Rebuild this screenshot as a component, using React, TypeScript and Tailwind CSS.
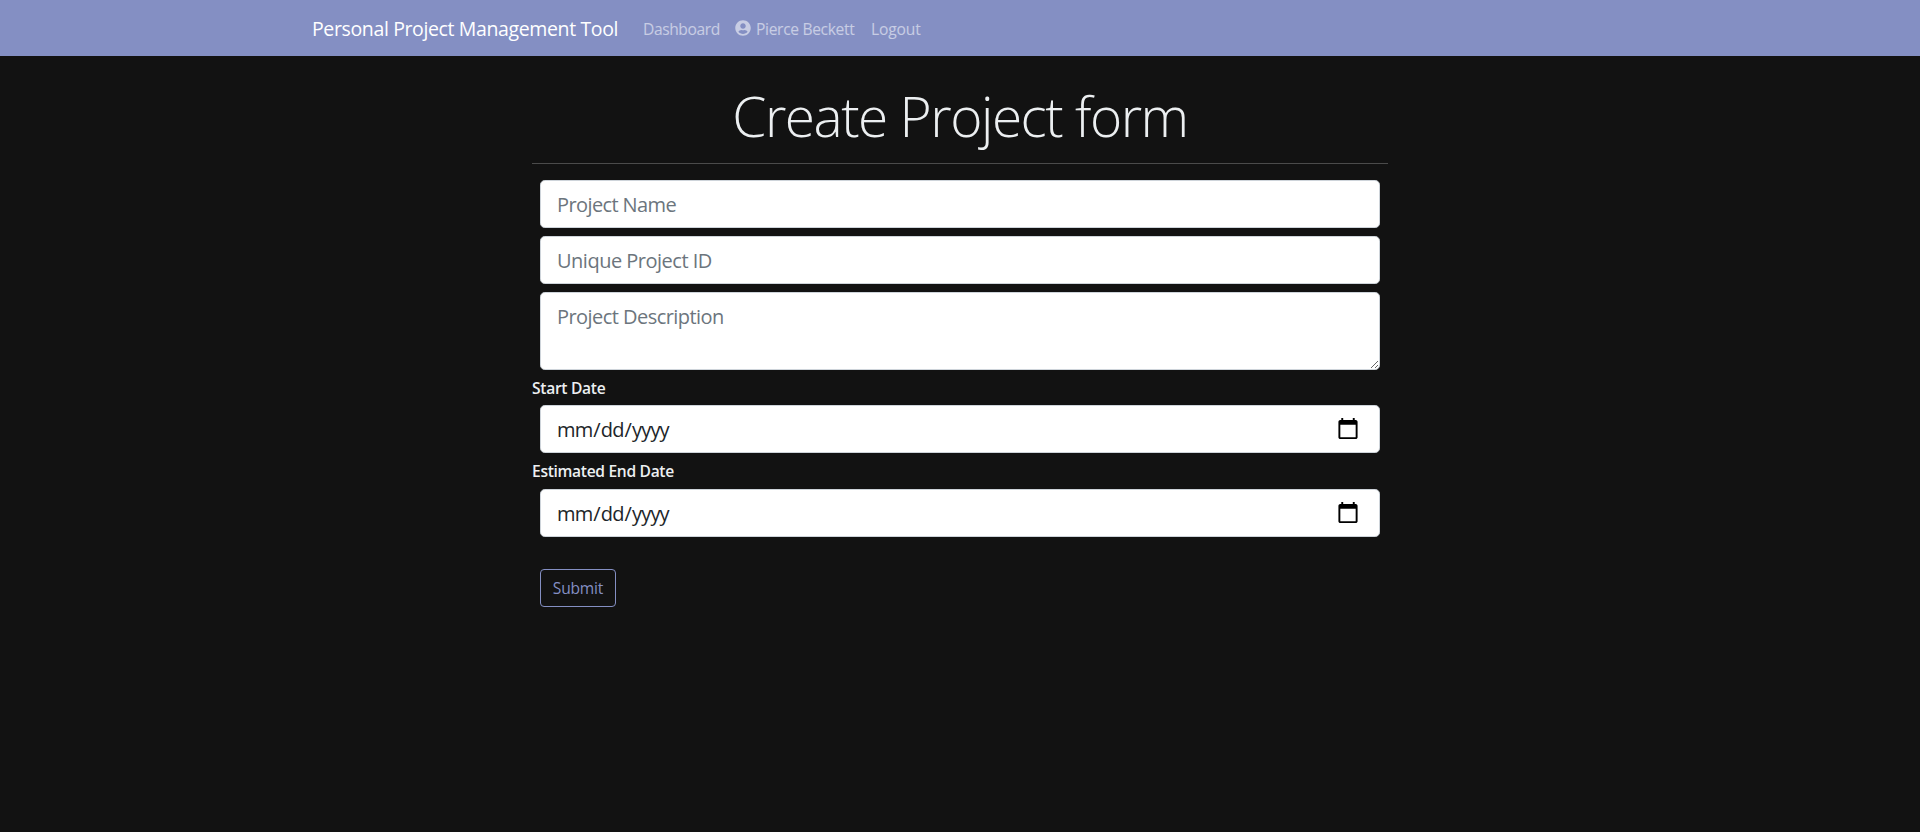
import React from "react";

const field =
  "mx-2 block w-[840px] rounded-[4.8px] border border-[#ced4da] bg-white px-4 text-[20px] leading-[30px] placeholder:text-[#6c757d] placeholder:opacity-100 outline-none";

const dateField =
  "h-12 pt-[9px] pb-[7px] text-[19.5px] tracking-[-0.85px] text-[#212529] [&::-webkit-calendar-picker-indicator]:mr-px [&::-webkit-calendar-picker-indicator]:mb-[2px] [&::-webkit-calendar-picker-indicator]:h-6 [&::-webkit-calendar-picker-indicator]:w-6 [&::-webkit-datetime-edit]:-ml-px";

export default function App() {
  return (
    <div className="min-h-screen bg-[#121212] font-['Open_Sans','Noto_Sans',sans-serif] text-[#eceff1]">
      <nav className="flex h-14 items-center bg-[#848fc3] pl-[312px] pt-px">
        <a className="mr-6 w-[307px] whitespace-nowrap text-[19.5px] leading-[30px] tracking-[-0.37px] text-white">
          Personal Project Management Tool
        </a>
        <a className="w-[92px] whitespace-nowrap text-[15.6px] leading-6 tracking-[-0.4px] text-white/55">Dashboard</a>
        <a className="flex w-[136px] items-center whitespace-nowrap text-[15.6px] leading-6 tracking-[-0.33px] text-white/55">
          <svg className="mr-[5px] mb-[2px] h-4 w-4" viewBox="0 0 496 512" fill="currentColor">
            <path d="M248 8C111 8 0 119 0 256s111 248 248 248 248-111 248-248S385 8 248 8zm0 96c48.600 0 88 39.400 88 88s-39.400 88-88 88-88-39.400-88-88 39.400-88 88-88zm0 344c-58.700 0-111.300-26.600-146.500-68.200 18.800-35.400 55.600-59.800 98.500-59.800 2.400 0 4.800.4 7.100 1.100 13 4.200 26.600 6.900 40.900 6.900 14.300 0 28-2.700 40.900-6.900 2.300-.7 4.700-1.100 7.100-1.100 42.900 0 79.700 24.400 98.500 59.800C359.300 421.400 306.700 448 248 448z" />
          </svg>
          <span>Pierce Beckett</span>
        </a>
        <a className="whitespace-nowrap text-[15.6px] leading-6 tracking-[-0.15px] text-white/55">Logout</a>
      </nav>

      <main className="mx-auto w-[856px] pt-[26px]">
        <h1 className="h-[81px] whitespace-nowrap text-center text-[55px] font-light leading-[67px] tracking-[-1.5px]">
          Create Project form
        </h1>
        <hr className="mb-4 border-t border-[#4b4b4b]" />
        <form>
          <input className={field + " mb-2 h-12 py-2 tracking-[-0.6px]"} placeholder="Project Name" />
          <input className={field + " mb-2 h-12 py-2 tracking-[-0.5px]"} placeholder="Unique Project ID" />
          <textarea
            className={field + " h-[78px] resize pt-[9px] pb-[7px] tracking-[-0.55px]"}
            placeholder="Project Description"
          />
          <label className="block h-[35px] pt-[6px] text-[15.6px] font-semibold leading-6 tracking-[-0.3px]">
            Start Date
          </label>
          <input type="date" className={field + " " + dateField} />
          <label className="block h-9 pt-[6px] text-[15.6px] font-semibold leading-6 tracking-[-0.32px]">
            Estimated End Date
          </label>
          <input type="date" className={field + " " + dateField} />
          <button
            type="button"
            className="mx-2 mt-8 h-[38px] w-[76px] rounded border border-[#848fc3] text-[15.6px] leading-6 tracking-[-0.2px] text-[#848fc3]"
          >
            Submit
          </button>
        </form>
      </main>
    </div>
  );
}
